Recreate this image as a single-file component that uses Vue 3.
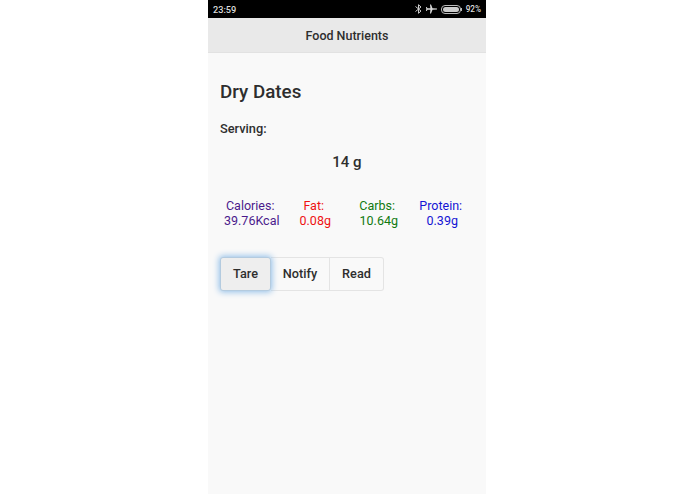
<script setup>
const stats = [
  { label: 'Calories:\u00a0', value: '39.76Kcal', color: '#4b1a8c' },
  { label: 'Fat:\u00a0', value: '0.08g', color: '#ee1111' },
  { label: 'Carbs:\u00a0', value: '10.64g', color: '#107a10' },
  { label: 'Protein:\u00a0', value: '0.39g', color: '#1414d4' },
]
</script>

<template>
  <div class="stage">
    <div class="phone">
      <div class="status">
        <span class="time">23:59</span>
        <div class="status-right">
          <svg width="7" height="10" viewBox="0 0 7 10" fill="none" stroke="#ccc" stroke-width="1">
            <path d="M0.5 2.5 L6 7 L3.5 9.3 V0.7 L6 3 L0.5 7.5" />
          </svg>
          <svg width="11" height="10" viewBox="0 0 11 10" fill="#ddd">
            <path d="M0 5 L0 4.4 L4.5 4.2 L6 .5 H7 L6.6 4.2 L9.5 4.2 L10.3 3 H11 L10.7 5 L11 7 H10.3 L9.5 5.8 L6.6 5.8 L7 9.5 H6 L4.5 5.8 L0 5.6 Z" transform="matrix(-1 0 0 1 11 0)" />
          </svg>
          <svg width="21" height="9" viewBox="0 0 21 9">
            <rect x=".5" y=".5" width="19" height="8" rx="3.5" fill="none" stroke="#bbb" />
            <rect x="2" y="2" width="16" height="5" rx="2.5" fill="#ccc" />
            <rect x="20" y="3" width="1" height="3" fill="#bbb" />
          </svg>
          <span class="pct">92%</span>
        </div>
      </div>
      <header class="bar">Food Nutrients</header>
      <main class="content">
        <h1 class="title">Dry Dates</h1>
        <div class="serving">Serving:</div>
        <div class="amount">14 g</div>
        <div class="stats">
          <div
            v-for="s in stats"
            :key="s.label"
            class="stat"
            :style="{ color: s.color }"
          >
            <div>{{ s.label }}</div>
            <div>{{ s.value }}</div>
          </div>
        </div>
        <div class="buttons">
          <button class="btn tare">Tare</button>
          <button class="btn notify">Notify</button>
          <button class="btn read">Read</button>
        </div>
      </main>
    </div>
  </div>
</template>

<style scoped>
.stage {
  width: 695px;
  height: 494px;
  background: #fff;
  display: flex;
  justify-content: center;
  overflow: hidden;
  font-family: Roboto, "Liberation Sans", sans-serif;
}
.phone {
  width: 278px;
  margin-right: 1px;
  height: 494px;
  background: #f9f9f9;
  display: flex;
  flex-direction: column;
}
.status {
  height: 18px;
  background: #000;
  display: flex;
  align-items: center;
  justify-content: space-between;
  padding: 0 5px 0 4px;
  color: #ddd;
}
.time {
  font-size: 9.2px;
  font-weight: 500;
  margin-left: 1px;
}
.status-right {
  display: flex;
  align-items: center;
  gap: 4px;
}
.pct {
  font-size: 8.2px;
  font-weight: 500;
}
.bar {
  height: 35px;
  background: #e9e9e9;
  border-bottom: 1px solid #e2e2e2;
  box-sizing: border-box;
  display: flex;
  align-items: center;
  justify-content: center;
  font-size: 12.5px;
  font-weight: 500;
  color: #2e2e2e;
}
.content {
  padding: 0 12px;
  color: #2e2e2e;
}
.title {
  margin: 27px 0 0;
  font-size: 18.8px;
  line-height: 24px;
  font-weight: 500;
}
.serving {
  margin-top: 17px;
  font-size: 12.8px;
  line-height: 16px;
  font-weight: 500;
}
.amount {
  margin-top: 16px;
  text-align: center;
  font-size: 15px;
  line-height: 18px;
  font-weight: 500;
}
.stats {
  margin-top: 27px;
  display: grid;
  grid-template-columns: repeat(4, 1fr);
}
.stat {
  text-align: center;
  font-size: 12.5px;
  line-height: 15px;
}
.buttons {
  margin-top: 29px;
  display: flex;
}
.btn {
  height: 34px;
  padding: 0 0 2px;
  box-sizing: border-box;
  background: #f9f9f9;
  border: 1px solid #e4e4e4;
  border-left: none;
  font-family: inherit;
  font-size: 12.7px;
  font-weight: 500;
  color: #2e2e2e;
}
.tare {
  width: 51px;
  background: #eeeeee;
  border: 1px solid #b4cbdf;
  border-radius: 3px;
  box-shadow: 0 0 6px 1px #8fbde8;
  position: relative;
}
.notify {
  width: 59px;
}
.read {
  width: 54px;
  border-radius: 0 3px 3px 0;
}
</style>
